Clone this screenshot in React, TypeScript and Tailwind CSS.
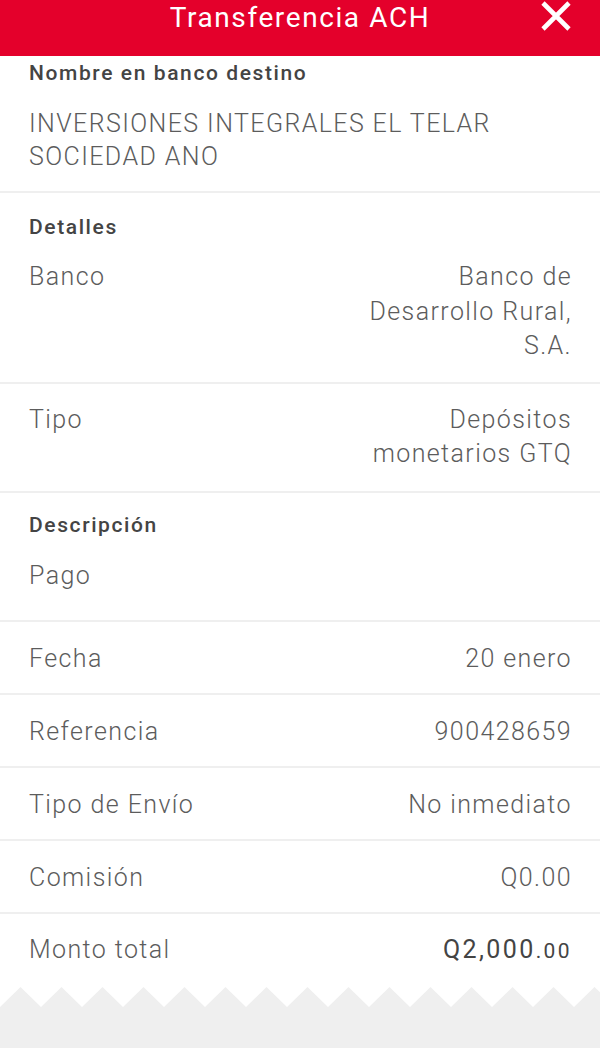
import React from "react";

type Row = {
  label: string;
  value: React.ReactNode;
};

const rows: Row[] = [
  { label: "Fecha", value: "20 enero" },
  { label: "Referencia", value: "900428659" },
  { label: "Tipo de Envío", value: "No inmediato" },
  { label: "Comisión", value: "Q0.00" },
];

function Divider() {
  return <div className="h-[2px] bg-[#efefef]" />;
}

function Heading({ children }: { children: React.ReactNode }) {
  return <p className="text-[21px] leading-[24px] font-medium tracking-[1.6px] text-[#444]">{children}</p>;
}

function Zigzag() {
  // white teeth biting into the grey footer
  const pts: string[] = ["0,0", "0,23"];
  for (let x = 0; x <= 620; x += 41) {
    pts.push(`${x},23`);
    pts.push(`${x + 20.5},3`);
  }
  pts.push("620,0");
  return (
    <svg width="600" height="23" viewBox="0 0 600 23" className="block">
      <polygon points={pts.join(" ")} fill="#ffffff" />
    </svg>
  );
}

export default function App() {
  return (
    <div className="w-[600px] h-[1048px] overflow-hidden bg-[#efefef] font-['Roboto',sans-serif]">
      <header className="relative h-[56px] bg-[#e4002b] flex justify-center">
        <h1 className="text-white text-[28px] leading-[36px] tracking-[1.6px]">Transferencia ACH</h1>
        <button className="absolute right-[27px] top-[1px] w-[34px] h-[30px] flex items-center justify-center">
          <svg width="32" height="30" viewBox="0 0 32 30">
            <path d="M3 2 L29 28 M29 2 L3 28" stroke="#ffffff" strokeWidth="4.6" />
          </svg>
        </button>
      </header>

      <div className="bg-white text-[25px] font-light tracking-[1.4px] text-[#5c5c5c]">
        <section className="pl-[29px] pr-[28px] pt-[5px] pb-[18px]">
          <Heading>Nombre en banco destino</Heading>
          <p className="mt-[22px] leading-[33px]">
            INVERSIONES INTEGRALES EL TELAR
            <br />
            SOCIEDAD ANO
          </p>
        </section>
        <Divider />

        <section className="pl-[29px] pr-[28px] pt-[22px] pb-[18px]">
          <Heading>Detalles</Heading>
          <div className="mt-[21px] flex justify-between leading-[34.5px]">
            <span>Banco</span>
            <span className="text-right">
              Banco de
              <br />
              Desarrollo Rural,
              <br />
              S.A.
            </span>
          </div>
        </section>
        <Divider />

        <section className="pl-[29px] pr-[28px] pt-[19px] pb-[19px]">
          <div className="flex justify-between leading-[34.5px]">
            <span>Tipo</span>
            <span className="text-right">
              Depósitos
              <br />
              monetarios GTQ
            </span>
          </div>
        </section>
        <Divider />

        <section className="pl-[29px] pr-[28px] pt-[20px] pb-[27px]">
          <Heading>Descripción</Heading>
          <p className="mt-[22px] leading-[34px]">Pago</p>
        </section>
        <Divider />

        {rows.map((r) => (
          <React.Fragment key={r.label}>
            <div className="h-[71px] pt-[3px] pl-[29px] pr-[28px] flex items-center justify-between">
              <span>{r.label}</span>
              <span>{r.value}</span>
            </div>
            <Divider />
          </React.Fragment>
        ))}

        <div className="h-[70px] pt-[3px] pl-[29px] pr-[28px] flex items-center justify-between">
          <span>Monto total</span>
          <span className="text-[#444] font-normal tracking-[2.4px]">
            Q2,000<span className="text-[21px]">.00</span>
          </span>
        </div>
      </div>
      <Zigzag />
    </div>
  );
}
